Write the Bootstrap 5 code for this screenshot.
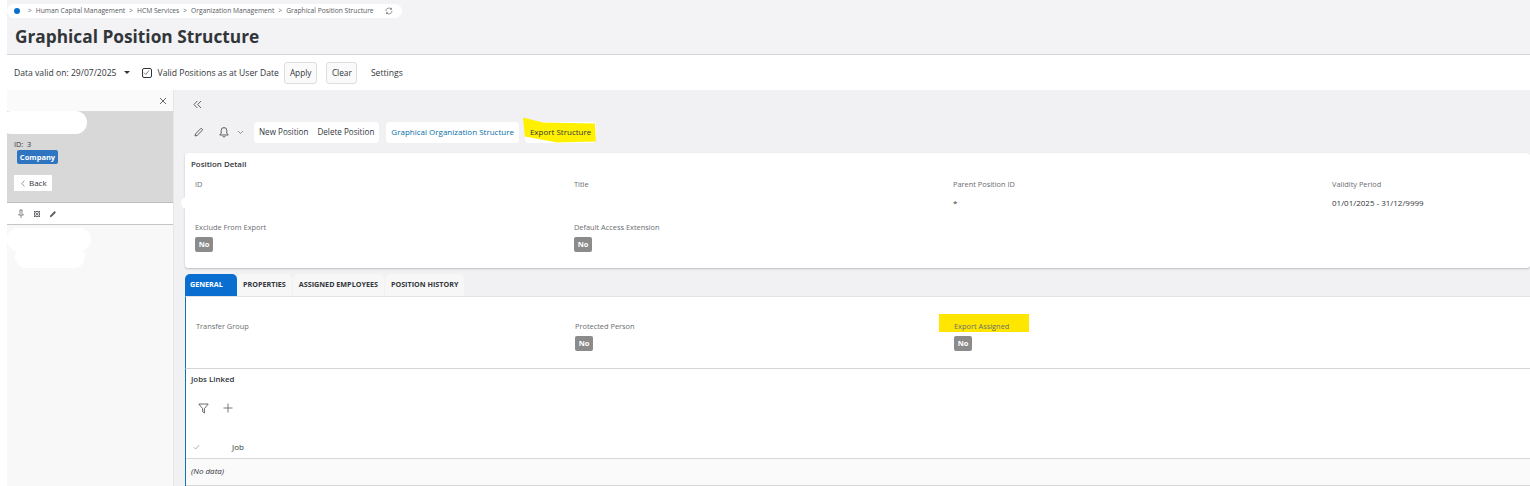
<!DOCTYPE html>
<html lang="en">
<head>
<meta charset="utf-8">
<title>Graphical Position Structure</title>
<link href="https://cdn.jsdelivr.net/npm/bootstrap@5.3.0/dist/css/bootstrap.min.css" rel="stylesheet">
<style>
html,body{height:486px;overflow:hidden;background:#fff}
body{font-family:"Open Sans","Liberation Sans",sans-serif;font-size:8.5px;color:#32363a;line-height:12px}
.shell{margin-left:7px;width:1523px;height:486px;display:flex;flex-direction:column;overflow:hidden}
.page-top{height:55px;background:#f3f2f4;border-bottom:1px solid #d6d6d6;padding-top:4px;flex:none}
.crumbs{display:inline-flex;align-items:center;height:14px;background:#fff;border-radius:7px;padding:0 9px 0 7px;font-size:6.7px;color:#55595e;gap:3px;line-height:10px}
.crumb-dot{width:6px;height:6px;border-radius:50%;background:#0a6ed1;margin-right:4px}
.crumb-sep{color:#6a6d70;margin:0 1px}
.page-title{font-size:17.3px;font-weight:700;color:#32363a;line-height:24px;margin:7px 0 0 8px}
.filterbar{height:35px;background:#fff;display:flex;align-items:center;padding-left:7px;flex:none;font-size:8.6px;color:#32363a}
.fake-check{width:10px;height:10px;border:1px solid #32363a;border-radius:2px;margin:0 6px 0 12px;display:flex;align-items:center;justify-content:center}
.flat-btn{height:22px;background:#fafafa;border:1px solid #dedede;border-radius:3px;font-size:8.3px;color:#32363a;padding:0 5px;line-height:20px}
.apply-btn{margin-left:5px;width:33px}
.clear-btn{margin-left:9px;width:31px}
.settings-link{margin-left:14px}
.caret-down{width:0;height:0;border-left:3px solid transparent;border-right:3px solid transparent;border-top:3px solid #32363a;margin-left:7px}
.work{display:flex;flex:1;min-height:0}
.side{width:167px;flex:none;background:#f8f8f8;position:relative;border-right:1px solid #e6e6e6}
.side-head{height:21px;background:#fafafa;display:flex;justify-content:flex-end;align-items:center;padding-right:6px}
.side-gray{height:92px;background:#d8d8d8;border-bottom:1px solid #bdbdbd;padding:27px 0 0 7px;font-size:7.3px}
.tag-blue{display:block;width:41px;height:14px;margin:0 0 0 3px;background:#2f74c0;color:#fff;border-radius:2px;font-size:7.5px;font-weight:700;line-height:14px;padding:0;text-align:center}
.back-btn{display:flex;align-items:center;gap:4px;width:38px;height:16px;background:#fff;border-radius:0;border:0;font-size:8px;line-height:16px;margin-top:11px;padding:0 0 0 7px;text-align:left;color:#32363a}
.side-tools{height:22px;background:#fff;border-bottom:1px solid #c6c6c6;display:flex;align-items:center;gap:8px;padding-left:10px}
.blot{position:absolute;background:#fff;border-radius:12px}
.blot-a{left:-7px;top:21px;width:87px;height:23px}
.blot-b{left:0;top:138px;width:84px;height:23px}
.blot-c{left:8px;top:155px;width:70px;height:23px}
.blot-d{left:7px;top:107px;width:14px;height:12px;border-radius:6px}
.main{flex:1;background:#f1f0f3;padding:0 0 0 11px;min-width:0;overflow:hidden;position:relative}
.collapse-row{height:26px;padding:8px 0 0 8px}
.action-row{height:26px;display:flex;align-items:center;margin-top:3px}
.icon-gap{margin-left:9px}
.bell-icon{margin-left:15px}
.action-group{height:21px;background:#fff;border-radius:4px;display:flex;align-items:center;padding:0 5px;gap:9px;color:#32363a;font-size:8px;margin-right:6px}
.action-group.first{margin-left:10px;margin-right:7px;font-size:8.1px}
.action-link{color:#0a6ea8}
.hl{position:relative;isolation:isolate}
.hl-stroke{position:absolute;left:-2px;top:-4px;width:73px;height:25px;background:#fff000;z-index:-1;clip-path:polygon(0 0,20px 5px,72px 6px,73px 24px,34px 25px,2px 19px)}
.detail{margin-top:8px;height:115px;border:0;border-radius:3px;box-shadow:0 1px 2px rgba(0,0,0,.22);background:#fff;width:1345px;padding:5px 0 0 6px}
.detail-title{font-size:7.9px;font-weight:600;color:#32363a;line-height:12px}
.field-row{display:flex;padding-left:4px}
.row-one{height:43px;margin-top:9px}
.field-cell{flex:0 0 379px}
.field-label{font-size:7.4px;color:#6a6d70;line-height:10px}
.field-value{font-size:8px;color:#32363a;line-height:12px;margin-top:8px}
.no-tag{display:block;width:18px;height:15px;padding:0;margin-top:5px;background:#8b8b8b;color:#fff;border-radius:2px;font-size:7.5px;font-weight:700;line-height:15px;text-align:center}
.tab-row{display:flex;margin:6px 0 0;height:22px;align-items:stretch;padding:0;list-style:none;border:0}
.tab-item{background:#f7f7f8;border-radius:5px 5px 0 0;color:#32363a;font-size:7.2px;font-weight:700;line-height:20px;padding:0 6px;border:0;margin-right:1px}
.tab-item.active-tab{background:#0a6ed1;color:#fff;width:52px;padding:0 5px;margin-right:0}
.general{background:#fff;border-left:1px solid #1273a8;height:73px;border-top:1px solid #e3e3e3;border-bottom:1px solid #d4d4d4;padding-top:24px;padding-left:10px;width:1345px}
.general .field-row{padding-left:0}
.export-mark{position:relative;isolation:isolate;display:inline-block}
.export-mark::before{content:"";position:absolute;left:-15px;top:-7px;width:90px;height:18px;background:#ffe600;z-index:-1}
.jobs{background:#fff;border-left:1px solid #1273a8;height:117px;width:1345px;padding:4px 0 0 5px;position:relative}
.jobs-tools{display:flex;align-items:center;gap:14px;margin:13px 0 0 7px;height:20px}
.jobs-head{display:flex;align-items:center;height:18px;margin:20px 0 0 0;padding-left:2px;font-size:8px}
.jobs-head span{margin-left:32px}
.no-data{border-top:1px solid #d8d8d8;margin:2px 0 0 -5px;padding:6px 0 0 5px;background:#fafafa;height:28px;font-style:italic;font-size:8px;border-bottom:1px solid #d8d8d8}
</style>
</head>
<body>
<div class="shell">
  <header class="page-top">
    <nav class="crumbs" aria-label="breadcrumb">
      <span class="crumb-dot"></span><span class="crumb-sep">&gt;</span><span>Human Capital Management</span><span class="crumb-sep">&gt;</span><span>HCM Services</span><span class="crumb-sep">&gt;</span><span>Organization Management</span><span class="crumb-sep">&gt;</span><span>Graphical Position Structure</span>
      <svg class="ms-2" width="8" height="8" viewBox="0 0 8 8" fill="none" stroke="#6a6d70" stroke-width=".7"><path d="M1 4.2A3 3 0 0 1 6.4 2.2M7 3.8A3 3 0 0 1 1.6 5.8M6.5.8v1.6H5M1.5 7.2V5.6H3"/></svg>
    </nav>
    <h1 class="page-title">Graphical Position Structure</h1>
  </header>
  <div class="filterbar">
    <span>Data valid on: 29/07/2025</span><span class="caret-down"></span>
    <span class="fake-check"><svg width="7" height="7" viewBox="0 0 8 8" fill="none" stroke="#55595e" stroke-width=".9"><path d="M1.2 4.2 3.2 6.2 6.8 1.8"/></svg></span>
    <span>Valid Positions as at User Date</span>
    <button class="btn flat-btn apply-btn">Apply</button>
    <button class="btn flat-btn clear-btn">Clear</button>
    <span class="settings-link">Settings</span>
  </div>
  <div class="work">
    <aside class="side">
      <div class="side-head">
        <svg width="8" height="8" viewBox="0 0 8 8" stroke="#55595e" stroke-width=".9"><path d="M1 1 7 7M7 1 1 7"/></svg>
      </div>
      <div class="side-gray">
        <div>ID:&nbsp; 3</div>
        <span class="badge tag-blue">Company</span>
        <button class="btn back-btn"><svg width="4" height="7" viewBox="0 0 4 7" fill="none" stroke="#6a6d70" stroke-width=".7"><path d="M3.4.6.8 3.5l2.6 2.9"/></svg><span>Back</span></button>
      </div>
      <div class="side-tools">
        <svg width="8" height="9" viewBox="0 0 8 9" fill="none" stroke="#55595e" stroke-width=".7"><path d="M2.5 1h3M3 1v3.5L1.5 6h5L5 4.5V1M4 6v3"/></svg>
        <svg width="8" height="8" viewBox="0 0 8 8" fill="none" stroke="#55595e" stroke-width="1"><circle cx="4" cy="4" r="2.6"/><circle cx="4" cy="4" r=".8"/><path d="M1 1 2 2M7 1 6 2M1 7 2 6M7 7 6 6"/></svg>
        <svg width="8" height="8" viewBox="0 0 8 8" fill="#55595e"><path d="M.8 7.2 1.3 5.4 5.6 1.1 6.9 2.4 2.6 6.7Z"/></svg>
      </div>
      <div class="blot blot-a"></div>
      <div class="blot blot-b"></div>
      <div class="blot blot-c"></div>
    </aside>
    <main class="main">
      <div class="collapse-row">
        <svg width="9" height="9" viewBox="0 0 9 9" fill="none" stroke="#4f5358" stroke-width=".9"><path d="M4.3 1 1 4.5 4.3 8M8 1 4.7 4.5 8 8"/></svg>
      </div>
      <div class="action-row">
        <svg class="icon-gap" width="10" height="10" viewBox="0 0 10 10" fill="none" stroke="#4a4e52" stroke-width=".9"><path d="M1 9 1.6 6.8 7.2 1.2 8.8 2.8 3.2 8.4Z"/></svg>
        <svg class="bell-icon" width="10" height="12" viewBox="0 0 10 12" fill="none" stroke="#4a4e52" stroke-width=".9"><path d="M.8 9h8.4L7.8 7.2V4.4a2.8 2.8 0 0 0-5.6 0v2.8ZM4 10a1 1 0 0 0 2 0"/></svg>
        <svg class="ms-2" width="7" height="5" viewBox="0 0 7 5" fill="none" stroke="#6a6d70" stroke-width=".7"><path d="M1 1 3.5 3.6 6 1"/></svg>
        <div class="action-group first"><span>New Position</span><span>Delete Position</span></div>
        <div class="action-group"><span class="action-link">Graphical Organization Structure</span></div>
        <div class="action-group hl"><span class="hl-stroke"></span><span>Export Structure</span></div>
      </div>
      <section class="card detail">
        <div class="detail-title">Position Detail</div>
        <div class="field-row row-one">
          <div class="field-cell"><div class="field-label">ID</div></div>
          <div class="field-cell"><div class="field-label">Title</div></div>
          <div class="field-cell"><div class="field-label">Parent Position ID</div><div class="field-value">*</div></div>
          <div class="field-cell"><div class="field-label">Validity Period</div><div class="field-value">01/01/2025 - 31/12/9999</div></div>
        </div>
        <div class="field-row">
          <div class="field-cell"><div class="field-label">Exclude From Export</div><span class="badge no-tag">No</span></div>
          <div class="field-cell"><div class="field-label">Default Access Extension</div><span class="badge no-tag">No</span></div>
        </div>
      </section>
      <div class="blot blot-d"></div>
      <ul class="tab-row">
        <li class="tab-item active-tab">GENERAL</li>
        <li class="tab-item">PROPERTIES</li>
        <li class="tab-item">ASSIGNED EMPLOYEES</li>
        <li class="tab-item">POSITION HISTORY</li>
      </ul>
      <section class="general">
        <div class="field-row">
          <div class="field-cell"><div class="field-label">Transfer Group</div></div>
          <div class="field-cell"><div class="field-label">Protected Person</div><span class="badge no-tag">No</span></div>
          <div class="field-cell"><div class="field-label"><span class="export-mark">Export Assigned</span></div><span class="badge no-tag">No</span></div>
        </div>
      </section>
      <section class="jobs">
        <div class="detail-title">Jobs Linked</div>
        <div class="jobs-tools">
          <svg width="11" height="11" viewBox="0 0 11 11" fill="none" stroke="#55595e" stroke-width=".9"><path d="M.8 1h9.4L6.4 5.6v4.4L4.6 8.6v-3Z"/></svg>
          <svg width="10" height="10" viewBox="0 0 10 10" fill="none" stroke="#55595e" stroke-width=".8"><path d="M5 .5v9M.5 5h9"/></svg>
        </div>
        <div class="jobs-head">
          <svg width="7" height="6" viewBox="0 0 7 6" fill="none" stroke="#8a8d90" stroke-width=".7"><path d="M.8 3.2 2.6 5 6.2 1"/></svg>
          <span>Job</span>
        </div>
        <div class="no-data">(No data)</div>
      </section>
    </main>
  </div>
</div>
</body>
</html>
